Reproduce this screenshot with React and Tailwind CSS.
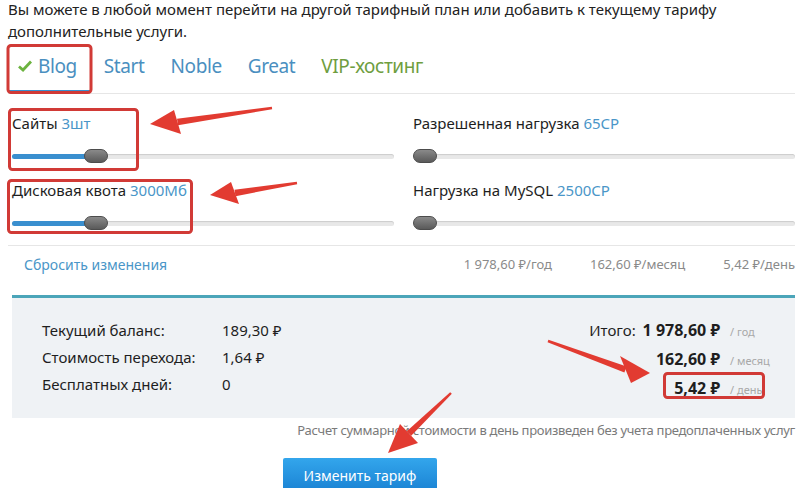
import React from "react";

const tabs = [
  { name: "Blog", active: true },
  { name: "Start" },
  { name: "Noble" },
  { name: "Great" },
  { name: "VIP-хостинг", vip: true },
];

const sliders = [
  { label: "Сайты", value: "3шт", pct: 22 },
  { label: "Разрешенная нагрузка", value: "65CP", pct: 0 },
  { label: "Дисковая квота", value: "3000Мб", pct: 22 },
  { label: "Нагрузка на MySQL", value: "2500CP", pct: 0 },
];

const Slider = ({ label, value, pct }) => (
  <div className="h-[67px] pt-[7px]">
    <div className="text-[15px] leading-[20px] text-[#1e1e1e]">
      {label} <span className="text-[#4a96c8]">{value}</span>
    </div>
    <div className="relative mt-[21px] h-[5px] rounded-full bg-[#e8e8e8] shadow-[inset_0_1px_1px_rgba(0,0,0,0.12)]">
      <div
        className="absolute left-0 top-0 h-[5px] rounded-full bg-[#3a8fcf]"
        style={{ width: `${pct}%` }}
      />
      <div
        className="absolute top-[-5px] h-[14px] w-[24px] rounded-[7px] border border-[#4c4c4c] bg-gradient-to-b from-[#8a8a8a] to-[#5a5a5a]"
        style={{ left: pct ? `calc(${pct}% - 12px)` : "0px" }}
      />
    </div>
  </div>
);

const Arrow = ({ tail, tip, a, b }) => {
  // tapered shaft from tail to the head base, then the head triangle
  const mx = (a[0] + b[0]) / 2;
  const my = (a[1] + b[1]) / 2;
  const dx = mx - tail[0];
  const dy = my - tail[1];
  const len = Math.hypot(dx, dy);
  const nx = -dy / len;
  const ny = dx / len;
  const t0 = 1.2;
  const t1 = 3.2;
  const shaft = [
    [tail[0] + nx * t0, tail[1] + ny * t0],
    [mx + nx * t1, my + ny * t1],
    [mx - nx * t1, my - ny * t1],
    [tail[0] - nx * t0, tail[1] - ny * t0],
  ]
    .map((p) => p.join(","))
    .join(" ");
  return (
    <g fill="#e23b31">
      <polygon points={shaft} />
      <polygon points={`${tip[0]},${tip[1]} ${a[0]},${a[1]} ${b[0]},${b[1]}`} />
    </g>
  );
};

export default function App() {
  return (
    <div className="relative h-[488px] w-[803px] overflow-hidden bg-white font-['Noto_Sans',sans-serif] text-[#1e1e1e]">
      <div className="pl-2 pr-2">
        <p className="-mt-[2px] text-[15px] leading-[22px] text-[#222]">
          Вы можете в любой момент перейти на другой тарифный план или добавить к текущему тарифу
          дополнительные услуги.
        </p>

        <div className="mt-[5px] flex h-[47px] items-center border-b border-[#e6e6e6] text-[19px] tracking-[-0.4px]">
          {tabs.map((t) => (
            <div
              key={t.name}
              className={
                t.active
                  ? "flex h-full items-center gap-[6px] border-b-[3px] border-[#3a8fcf] pb-[5px] pl-[10px] pr-[14px] text-[#4a8fc0]"
                  : t.vip
                  ? "flex h-full items-center px-[13px] pb-[8px] text-[#6f9e3f]"
                  : "flex h-full items-center px-[13px] pb-[8px] text-[#4a8fc0]"
              }
            >
              {t.active && (
                <svg width="14" height="12" viewBox="0 0 14 12">
                  <path d="M1 6.5 L5 10 L13 1.5" fill="none" stroke="#6cb33f" strokeWidth="2.8" />
                </svg>
              )}
              {t.name}
            </div>
          ))}
        </div>

        <div className="mt-[12px] grid grid-cols-2 gap-x-[19px] pl-1">
          {sliders.map((s) => (
            <Slider key={s.label} {...s} />
          ))}
        </div>

        <div className="mt-[5px] flex h-[38px] items-center justify-between border-t border-[#e6e6e6] pl-4">
          <span className="text-[14px] text-[#4a96c8]">Сбросить изменения</span>
          <div className="flex gap-[38px] text-[13px] text-[#8a8a8a]">
            <span>1 978,60 ₽/год</span>
            <span>162,60 ₽/месяц</span>
            <span>5,42 ₽/день</span>
          </div>
        </div>

        <div className="ml-1 mt-[12px] flex h-[123px] items-start justify-between border-t-[3px] border-[#4ba5b9] bg-[#eff2f5] pl-[30px] pr-[30px] pt-[22px]">
          <div className="grid grid-cols-[180px_auto] gap-y-[7px] text-[15px] leading-[20px]">
            <span>Текущий баланс:</span>
            <span>189,30 ₽</span>
            <span>Стоимость перехода:</span>
            <span>1,64 ₽</span>
            <span>Бесплатных дней:</span>
            <span>0</span>
          </div>
          <div className="grid grid-cols-[auto_45px] items-baseline gap-y-[7px] text-[15px] leading-[20px]">
            <span className="text-right">
              Итого: <b className="ml-[3px] text-[16px]">1 978,60 ₽</b>
            </span>
            <span className="whitespace-nowrap pl-[10px] text-[11px] text-[#a8a8a8]">/ год</span>
            <b className="text-right text-[16px]">162,60 ₽</b>
            <span className="whitespace-nowrap pl-[10px] text-[11px] text-[#a8a8a8]">/ месяц</span>
            <b className="text-right text-[16px]">5,42 ₽</b>
            <span className="whitespace-nowrap pl-[10px] text-[11px] text-[#a8a8a8]">/ день</span>
          </div>
        </div>

        <p className="mt-[2px] text-right text-[13px] leading-[20px] tracking-[-0.3px] text-[#7a7a7a]">
          Расчет суммарной стоимости в день произведен без учета предоплаченных услуг
        </p>

        <button className="ml-[275px] mt-[18px] h-[34px] w-[154px] rounded-[2px] bg-gradient-to-b from-[#33a6ec] to-[#1a82d3] text-[14px] text-white">
          Изменить тариф
        </button>
      </div>

      <svg className="pointer-events-none absolute left-0 top-0" width="803" height="488">
        <g fill="none" stroke="#d13a36" strokeWidth="3">
          <rect x="8" y="45.5" width="83" height="47" rx="3" />
          <rect x="9.5" y="109.5" width="128" height="60" rx="3" />
          <rect x="8.5" y="180.5" width="183" height="52" rx="3" />
          <rect x="664.5" y="373.5" width="99" height="24" rx="3" />
        </g>
        <Arrow tail={[272, 108]} tip={[150, 124]} a={[174, 110]} b={[181, 134]} />
        <Arrow tail={[297, 183]} tip={[210, 195]} a={[231, 182]} b={[239, 204]} />
        <Arrow tail={[548, 341]} tip={[650, 373]} a={[620, 356]} b={[631, 383]} />
        <Arrow tail={[451, 393]} tip={[388, 453]} a={[400, 424]} b={[418, 443]} />
      </svg>
    </div>
  );
}
